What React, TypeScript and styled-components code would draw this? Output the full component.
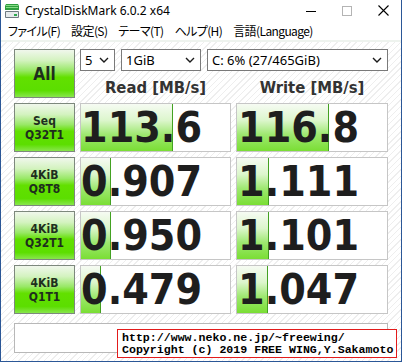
import React from 'react';
import styled, { createGlobalStyle } from 'styled-components';

const GlobalStyle = createGlobalStyle`
    html, body {
        margin: 0;
        padding: 0;
        background: #ffffff;
    }
    body {
        width: 402px;
        height: 362px;
        overflow: hidden;
    }
`;

const Window = styled.div`
    position: relative;
    width: 402px;
    height: 362px;
    box-sizing: border-box;
    border: 1px solid #2b5797;
    border-top: none;
    display: flex;
    flex-direction: column;
    background: #ffffff;
    font-family: 'Noto Sans', sans-serif;
`;

const TitleBar = styled.div`
    height: 21px;
    display: flex;
    align-items: center;
    padding-left: 3px;
    flex-shrink: 0;
`;

const AppIcon = styled.svg`
    width: 16px;
    height: 16px;
    flex-shrink: 0;
`;

const Title = styled.span`
    margin-left: 5px;
    font-size: 12px;
    color: #000000;
    flex: 1;
`;

const Control = styled.div`
    width: 36px;
    height: 21px;
    display: flex;
    align-items: center;
    justify-content: center;
`;

const MenuBar = styled.div`
    height: 19px;
    display: flex;
    align-items: center;
    gap: 11px;
    padding-left: 7px;
    font-family: 'Noto Sans CJK JP', sans-serif;
    font-feature-settings: 'palt';
    font-size: 12px;
    letter-spacing: -0.6px;
    color: #000000;
    border-bottom: 2px solid #eef3ee;
    flex-shrink: 0;
`;

const MenuItem = styled.span`
    white-space: nowrap;
`;

const Content = styled.div`
    flex: 1;
    padding: 7px 0 0 13px;
    background: repeating-linear-gradient(135deg, #ffffff 0px, #ffffff 3.5px, #eeeeee 3.5px, #eeeeee 4.5px);
`;

const Grid = styled.div`
    display: grid;
    grid-template-columns: 61px 151px 152px;
    grid-auto-rows: 49px;
    column-gap: 5px;
    row-gap: 5px;
`;

const TestButton = styled.div<{ $big?: boolean }>`
    box-sizing: border-box;
    border: 1px solid #7d887d;
    background: linear-gradient(to bottom, #f0f7ec 0%, #d4f3c0 22%, #98e866 44%, #62e000 58%, #5cde00 86%, #88e64c 100%);
    display: flex;
    flex-direction: column;
    align-items: center;
    justify-content: center;
    font-family: 'DejaVu Sans Condensed', 'DejaVu Sans', sans-serif;
    font-weight: bold;
    font-size: ${(props) => (props.$big ? '17px' : '12px')};
    line-height: 14px;
    color: #1e2e1e;
`;

const TopPanel = styled.div`
    grid-column: 2 / 4;
    display: grid;
    grid-template-columns: 151px 152px;
    grid-template-rows: 22px 27px;
    column-gap: 5px;
`;

const Selects = styled.div`
    grid-column: 1 / 3;
    display: flex;
    gap: 6px;
`;

const Select = styled.div<{ $w: number }>`
    box-sizing: border-box;
    width: ${(props) => props.$w}px;
    height: 22px;
    border: 1px solid #7a7a7a;
    background: #ffffff;
    display: flex;
    align-items: center;
    justify-content: space-between;
    padding: 0 5px 0 4px;
    font-family: 'Noto Sans', sans-serif;
    font-size: 13px;
    color: #000000;
`;

const ColumnTitle = styled.div`
    display: flex;
    align-items: flex-end;
    justify-content: center;
    padding-bottom: 1px;
    font-family: 'DejaVu Sans Condensed', 'DejaVu Sans', sans-serif;
    font-weight: bold;
    font-size: 16.5px;
    color: #333333;
`;

const Result = styled.div<{ $fill: number }>`
    box-sizing: border-box;
    border: 1px solid #c6c6c6;
    background:
        linear-gradient(#43a122, #43a122) no-repeat ${(props) => props.$fill - 1}px 0 / 1px 100%,
        linear-gradient(to bottom, #f6fbf3 0%, #dcf6cc 35%, #9ee870 65%, #7ade34 100%) no-repeat 0 0 / ${(props) => props.$fill}px 100%,
        #ffffff;
    display: flex;
    align-items: center;
    justify-content: flex-end;
    padding-right: 28px;
    font-family: 'DejaVu Sans Condensed', 'DejaVu Sans', sans-serif;
    font-weight: bold;
    font-size: 42.5px;
    color: #1e1e1e;
`;

const Comment = styled.div`
    box-sizing: border-box;
    width: 374px;
    height: 30px;
    margin-top: 9px;
    border: 1px solid #b8b8b8;
    background: #ffffff;
`;

const Copyright = styled.div`
    position: absolute;
    left: 116px;
    top: 329px;
    box-sizing: border-box;
    width: 280px;
    height: 29px;
    border: 1px solid #e31b1b;
    background: #ffffff;
    padding: 2px 0 0 4px;
    font-family: 'Liberation Mono', monospace;
    font-weight: bold;
    font-size: 11.6px;
    line-height: 12px;
    color: #000000;
    white-space: pre;
`;

const Chevron = () => (
    <svg width="10" height="6" viewBox="0 0 10 6">
        <path d="M1 1l4 4 4-4" fill="none" stroke="#1a1a1a" strokeWidth="1.4" />
    </svg>
);

const rows = [
    { label: ['Seq', 'Q32T1'], read: '113.6', readFill: 92, write: '116.8', writeFill: 92 },
    { label: ['4KiB', 'Q8T8'], read: '0.907', readFill: 30, write: '1.111', writeFill: 32 },
    { label: ['4KiB', 'Q32T1'], read: '0.950', readFill: 30, write: '1.101', writeFill: 32 },
    { label: ['4KiB', 'Q1T1'], read: '0.479', readFill: 20, write: '1.047', writeFill: 31 },
];

const menus = ['ファイル(F)', '設定(S)', 'テーマ(T)', 'ヘルプ(H)', '言語(Language)'];

function App() {
    return (
        <>
            <GlobalStyle />
            <Window>
                <TitleBar>
                    <AppIcon viewBox="0 0 16 16">
                        <path d="M2 1h12l1 2v4H1V3z" fill="#2e9e3e" />
                        <rect x="2" y="2" width="12" height="1" fill="#86dc86" />
                        <rect x="2" y="4" width="12" height="1" fill="#86dc86" />
                        <rect x="1" y="8" width="14" height="7" rx="1" fill="#6f7a80" />
                        <rect x="2" y="9" width="12" height="5" fill="#e6eaec" />
                        <rect x="10" y="11" width="3" height="2" fill="#2fa84f" />
                    </AppIcon>
                    <Title>CrystalDiskMark 6.0.2 x64</Title>
                    <Control>
                        <svg width="10" height="10" viewBox="0 0 10 10">
                            <path d="M0 5.5h10" stroke="#000" strokeWidth="1" />
                        </svg>
                    </Control>
                    <Control>
                        <svg width="10" height="10" viewBox="0 0 10 10">
                            <rect x="0.5" y="0.5" width="9" height="9" fill="none" stroke="#b4b4b4" />
                        </svg>
                    </Control>
                    <Control>
                        <svg width="11" height="11" viewBox="0 0 11 11">
                            <path d="M0.5 0.5l10 10M10.5 0.5l-10 10" stroke="#000" strokeWidth="1.1" />
                        </svg>
                    </Control>
                </TitleBar>
                <MenuBar>
                    {menus.map((m) => (
                        <MenuItem key={m}>{m}</MenuItem>
                    ))}
                </MenuBar>
                <Content>
                    <Grid>
                        <TestButton $big>All</TestButton>
                        <TopPanel>
                            <Selects>
                                <Select $w={35}>5<Chevron /></Select>
                                <Select $w={80}>1GiB<Chevron /></Select>
                                <Select $w={181}>C: 6% (27/465GiB)<Chevron /></Select>
                            </Selects>
                            <ColumnTitle>Read [MB/s]</ColumnTitle>
                            <ColumnTitle>Write [MB/s]</ColumnTitle>
                        </TopPanel>
                        {rows.map((r) => (
                            <React.Fragment key={r.label.join('-')}>
                                <TestButton>
                                    <span>{r.label[0]}</span>
                                    <span>{r.label[1]}</span>
                                </TestButton>
                                <Result $fill={r.readFill}>{r.read}</Result>
                                <Result $fill={r.writeFill}>{r.write}</Result>
                            </React.Fragment>
                        ))}
                    </Grid>
                    <Comment />
                </Content>
                <Copyright>{'http://www.neko.ne.jp/~freewing/\nCopyright (c) 2019 FREE WING,Y.Sakamoto'}</Copyright>
            </Window>
        </>
    );
}

export default App;
